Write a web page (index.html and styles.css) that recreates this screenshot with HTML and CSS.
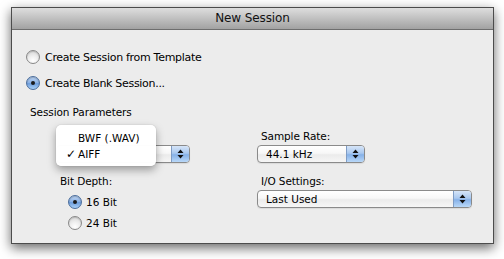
FILE: index.html
```html
<!DOCTYPE html>
<html>
<head>
<meta charset="utf-8">
<link rel="stylesheet" href="styles.css">
</head>
<body>
<div class="window">
  <div class="titlebar">New Session</div>
  <div class="content">
    <div class="radio-row big first"><span class="radio"></span><span>Create Session from Template</span></div>
    <div class="radio-row big second"><span class="radio on"></span><span>Create Blank Session...</span></div>
    <div class="section-title">Session Parameters</div>
    <div class="params">
      <div class="col col-left">
        <div class="label label-empty"></div>
        <div class="popup"><span class="popup-text"></span><span class="popup-arrows"><svg width="7" height="10" viewBox="0 0 7 10"><path d="M3.5 0.5 L6.5 4 L0.5 4 Z M0.5 6 L6.5 6 L3.5 9.5 Z" fill="#111"/></svg></span></div>
        <div class="label label-gap">Bit Depth:</div>
        <div class="radio-row small r16"><span class="radio on"></span><span>16 Bit</span></div>
        <div class="radio-row small r24"><span class="radio"></span><span>24 Bit</span></div>
        <div class="menu">
          <div class="menu-item"><span class="check"></span>BWF (.WAV)</div>
          <div class="menu-item"><span class="check">✓</span>AIFF</div>
        </div>
      </div>
      <div class="col col-right">
        <div class="label">Sample Rate:</div>
        <div class="popup popup-rate"><span class="popup-text">44.1 kHz</span><span class="popup-arrows"><svg width="7" height="10" viewBox="0 0 7 10"><path d="M3.5 0.5 L6.5 4 L0.5 4 Z M0.5 6 L6.5 6 L3.5 9.5 Z" fill="#111"/></svg></span></div>
        <div class="label label-gap">I/O Settings:</div>
        <div class="popup popup-io"><span class="popup-text">Last Used</span><span class="popup-arrows"><svg width="7" height="10" viewBox="0 0 7 10"><path d="M3.5 0.5 L6.5 4 L0.5 4 Z M0.5 6 L6.5 6 L3.5 9.5 Z" fill="#111"/></svg></span></div>
      </div>
    </div>
  </div>
</div>
</body>
</html>
```
FILE: styles.css
```css
html, body {
  margin: 0;
  padding: 0;
  background: #ffffff;
}
body {
  width: 504px;
  height: 259px;
  overflow: hidden;
  font-family: "DejaVu Sans", sans-serif;
  color: #000;
}
.window {
  margin: 7px 0 0 11px;
  width: 483px;
  height: 237px;
  box-sizing: border-box;
  border: 1px solid #4c4c4c;
  background: #ececec;
  box-shadow: 0 4px 11px rgba(0, 0, 0, 0.6);
  display: flex;
  flex-direction: column;
}
.titlebar {
  height: 21px;
  line-height: 21px;
  border-bottom: 1px solid #6e6e6e;
  background: linear-gradient(#dedede, #c0c0c0 50%, #a2a2a2);
  text-align: center;
  font-size: 12px;
  letter-spacing: -0.1px;
  color: #111;
}
.content {
  padding: 20px 0 0 14px;
  display: flex;
  flex-direction: column;
}
.radio-row {
  display: flex;
  align-items: center;
  gap: 5px;
  height: 14px;
}
.radio-row.big {
  font-size: 11px;
  letter-spacing: -0.3px;
}
.radio-row.second {
  margin-top: 12px;
}
.radio {
  width: 14px;
  height: 14px;
  box-sizing: border-box;
  border-radius: 50%;
  border: 1px solid #888888;
  background: radial-gradient(circle at 50% 80%, #ffffff 0%, #efefef 40%, #d0d0d0 100%);
  box-shadow: inset 0 1px 1px rgba(0,0,0,0.15);
  display: flex;
  align-items: center;
  justify-content: center;
  flex: none;
}
.radio.on {
  border-color: #4a6d9c;
  background: linear-gradient(#bcd4f2 0%, #8fb4e6 45%, #6d9ddc 55%, #a9d0f7 100%);
  box-shadow: inset 0 1px 1px rgba(0,0,0,0.2);
}
.radio.on::after {
  content: "";
  width: 4px;
  height: 4px;
  border-radius: 50%;
  background: #1a1a1a;
}
.section-title {
  margin: 16px 0 0 4px;
  font-size: 10.5px;
  line-height: 13px;
  letter-spacing: -0.1px;
}
.params {
  margin-top: 11px;
  display: grid;
  grid-template-columns: 134px 215px;
  column-gap: 67px;
  padding-left: 30px;
}
.col {
  position: relative;
  display: flex;
  flex-direction: column;
}
.label {
  font-size: 10.5px;
  line-height: 13px;
  padding-left: 4px;
  letter-spacing: -0.1px;
}
.label-empty {
  height: 13px;
}
.label-gap {
  margin-top: 12px;
}
.popup {
  margin-top: 2px;
  height: 18px;
  box-sizing: border-box;
  border: 1px solid #8a8a8a;
  border-radius: 4px;
  background: linear-gradient(#ffffff 0%, #f7f7f7 45%, #ebebeb 55%, #f6f6f6 100%);
  display: flex;
  align-items: center;
  justify-content: space-between;
  overflow: hidden;
  box-shadow: 0 1px 1px rgba(0,0,0,0.08);
}
.popup-rate {
  width: 108px;
}
.popup-io {
  width: 215px;
}
.popup-text {
  padding-left: 8px;
  font-size: 10.5px;
}
.popup-arrows {
  width: 18px;
  height: 100%;
  box-sizing: border-box;
  border-left: 1px solid #7f9cc4;
  background: linear-gradient(#d6e5f8 0%, #a9c8ef 45%, #86b1e8 55%, #b9d8f8 100%);
  display: flex;
  align-items: center;
  justify-content: center;
}
.radio-row.small {
  font-size: 10.5px;
  padding-left: 12px;
  gap: 4px;
}
.r16 {
  margin-top: 7px;
}
.r24 {
  margin-top: 7px;
}
.menu {
  position: absolute;
  left: 0;
  top: -5px;
  width: 100px;
  box-sizing: border-box;
  padding: 5px 0 4px 0;
  background: rgba(255, 255, 255, 0.98);
  border-radius: 5px;
  box-shadow: 0 4px 9px rgba(0, 0, 0, 0.35), 0 0 1px rgba(0,0,0,0.3);
}
.menu-item {
  display: flex;
  align-items: center;
  height: 16px;
  line-height: 16px;
  font-size: 10.5px;
}
.check {
  width: 22px;
  box-sizing: border-box;
  padding-left: 10px;
  font-size: 12px;
}
```
